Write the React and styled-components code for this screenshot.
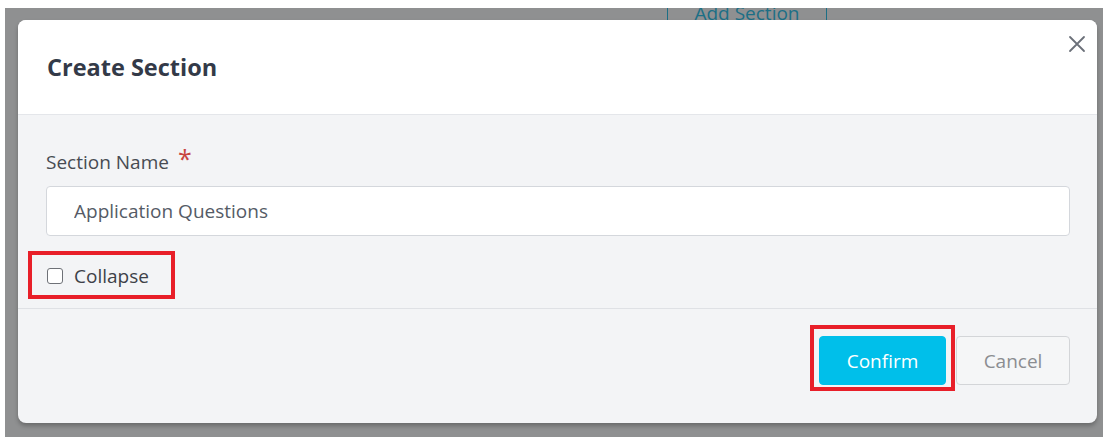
import React from 'react';
import styled, { createGlobalStyle } from 'styled-components';

const Global = createGlobalStyle`
  html, body {
    margin: 0;
    padding: 0;
    background: #ffffff;
  }
  * {
    box-sizing: border-box;
  }
`;

const Page = styled.div`
  width: 1110px;
  height: 442px;
  padding: 8px 7px 5px 5px;
  background: #ffffff;
  font-family: 'Open Sans', 'Noto Sans', sans-serif;
`;

const Backdrop = styled.div`
  position: relative;
  height: 100%;
  display: flex;
  padding: 12px 6px 14px 13px;
  background: #8f9091;
  overflow: hidden;
`;

// piece of the page underneath the overlay
const BehindTab = styled.div`
  position: absolute;
  top: -8px;
  left: 662px;
  width: 160px;
  height: 20px;
  display: flex;
  justify-content: center;
  border-left: 1px solid #1c6f86;
  border-right: 1px solid #1c6f86;
  color: #1c6f86;
  font-size: 19px;
  line-height: 26px;
`;

const Modal = styled.div`
  position: relative;
  flex: 1;
  display: flex;
  flex-direction: column;
  background: #f3f4f6;
  border-radius: 8px;
  box-shadow: 0 3px 4px rgba(0, 0, 0, 0.25);
  overflow: hidden;
`;

const Header = styled.div`
  height: 95px;
  display: flex;
  align-items: center;
  padding: 0 29px;
  background: #ffffff;
  border-bottom: 1px solid #e4e6ea;
`;

const Title = styled.h2`
  margin: 0;
  font-size: 23.5px;
  font-weight: 700;
  color: #333a48;
`;

const Close = styled.button`
  position: absolute;
  top: 12px;
  right: 8px;
  width: 24px;
  height: 24px;
  padding: 0;
  border: none;
  background: transparent;
  display: flex;
  align-items: center;
  justify-content: center;
`;

const Body = styled.div`
  display: flex;
  flex-direction: column;
  padding: 33px 27px 9px 28px;
  border-bottom: 1px solid #dfe1e5;
`;

const Label = styled.label`
  display: flex;
  align-items: flex-start;
  height: 24px;
  font-size: 19px;
  line-height: 28px;
  color: #474b52;
`;

const Required = styled.span`
  margin-left: 9px;
  color: #c8453f;
  font-size: 25px;
  line-height: 20px;
`;

const TextInput = styled.input`
  margin-top: 14px;
  height: 50px;
  width: 100%;
  padding: 0 27px;
  border: 1px solid #d4d7dc;
  border-radius: 4px;
  background: #ffffff;
  font-family: inherit;
  font-size: 19px;
  color: #555b66;
  outline: none;
`;

const Highlight = styled.div`
  display: inline-flex;
  align-items: center;
  align-self: ${(p) => (p.$start ? 'flex-start' : 'auto')};
  border: 4px solid #e81f29;
  padding: ${(p) => p.$pad};
  margin: ${(p) => p.$margin || 0};
`;

const CheckRow = styled.label`
  display: flex;
  align-items: center;
  gap: 11px;
  font-size: 19px;
  line-height: 24px;
  color: #3d4148;
`;

const Box = styled.span`
  width: 16px;
  height: 16px;
  border: 1.5px solid #6e7177;
  border-radius: 3px;
  background: #ffffff;
`;

const Footer = styled.div`
  flex: 1;
  display: flex;
  justify-content: flex-end;
  align-items: flex-start;
  padding: 16px 27px 0 0;
`;

const Button = styled.button`
  height: 49px;
  padding: 0;
  width: ${(p) => p.$width}px;
  border-radius: 4px;
  font-family: inherit;
  font-size: 19px;
  border: 1px solid ${(p) => (p.$primary ? '#00bfea' : '#d3d5d8')};
  background: ${(p) => (p.$primary ? '#00bfea' : '#f5f6f7')};
  color: ${(p) => (p.$primary ? '#ffffff' : '#8b8d91')};
`;

const CancelWrap = styled.div`
  padding-top: 11px;
  margin-left: 1px;
`;

export default function App() {
  return (
    <Page>
      <Global />
      <Backdrop>
        <BehindTab>Add Section</BehindTab>
        <Modal>
          <Header>
            <Title>Create Section</Title>
          </Header>
          <Close aria-label="close">
            <svg width="18" height="18" viewBox="0 0 18 18">
              <path d="M2 2 L16 16 M16 2 L2 16" stroke="#6b7079" strokeWidth="1.8" strokeLinecap="round" />
            </svg>
          </Close>
          <Body>
            <Label>
              Section Name<Required>*</Required>
            </Label>
            <TextInput defaultValue="Application Questions" />
            <Highlight $start $pad="9px 22px 7px 15px" $margin="15px 0 0 -18px">
              <CheckRow>
                <Box />
                Collapse
              </CheckRow>
            </Highlight>
          </Body>
          <Footer>
            <Highlight $pad="7px 5px 2px 5px">
              <Button $primary $width={127}>Confirm</Button>
            </Highlight>
            <CancelWrap>
              <Button $width={114}>Cancel</Button>
            </CancelWrap>
          </Footer>
        </Modal>
      </Backdrop>
    </Page>
  );
}
